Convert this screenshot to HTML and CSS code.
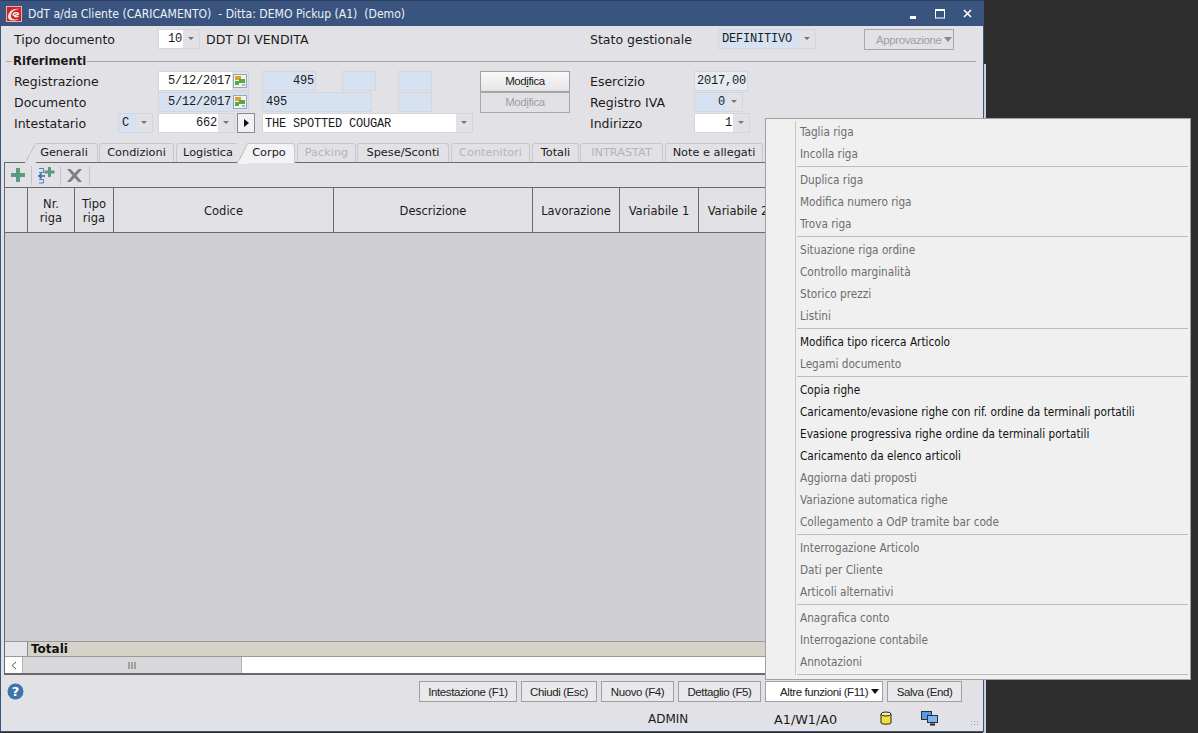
FILE: index.html
```html
<!DOCTYPE html>
<html lang="en">
<head>
    <meta charset="UTF-8">
    <title>DdT a/da Cliente</title>
    <link rel="stylesheet" href="styles.css">
</head>
<body>
    <div class="back-edge"></div>
    <div class="window">
        <div class="titlebar">
            <svg class="logo" width="16" height="16" viewBox="0 0 16 16">
                <rect width="16" height="16" fill="#c8242b"/>
                <rect x="0.500" y="0.500" width="15" height="15" fill="none" stroke="#e8b0a8"/>
                <path d="M2 11C2 5 8 1.500 14 3C9 3 5 6 5 10C5 13 8 14 13 13C8 15.500 2 15 2 11Z" fill="#f4e4dc"/>
                <path d="M7 9.500C7 6.500 12 5.500 12.500 8L8.500 9.700C9 11.200 11 11 12.500 10" fill="none" stroke="#fff" stroke-width="1.300"/>
            </svg>
            <span class="title-text">DdT a/da Cliente (CARICAMENTO)  - Ditta: DEMO Pickup (A1)  (Demo)</span>
            <span class="win-ctl ctl-min"><svg width="8" height="4"><rect y="1" width="6" height="3" fill="#fff"/></svg></span>
            <span class="win-ctl ctl-max"><svg width="10" height="10"><rect x="0.500" y="0.500" width="9" height="8.500" fill="none" stroke="#fff"/><rect width="10" height="2" fill="#fff"/></svg></span>
            <span class="win-ctl ctl-close"><svg width="9" height="9"><path d="M1 1L8 8M8 1L1 8" stroke="#fff" stroke-width="1.500"/></svg></span>
        </div>

        <div class="row row-first">
            <label class="lbl lbl-tipo">Tipo documento</label>
            <span class="combo w-tipo"><span class="val val-white right">10</span><span class="arrow"></span></span>
            <span class="lbl lbl-ddt">DDT DI VENDITA</span>
            <label class="lbl lbl-stato">Stato gestionale</label>
            <span class="combo w-stato"><span class="val val-blue">DEFINITIVO</span><span class="arrow"></span></span>
            <span class="btn btn-off btn-appr">Approvazione<i class="caret"></i></span>
        </div>

        <div class="group-head">
            <span class="group-line group-line-short"></span>
            <span class="group-title">Riferimenti</span>
            <span class="group-line"></span>
        </div>

        <div class="row row-reg">
            <label class="lbl lbl-main">Registrazione</label>
            <span class="combo w-date"><span class="val val-white right">5/12/2017</span><span class="cal"><svg width="14" height="14" viewBox="0 0 14 14"><rect x="0.500" y="0.500" width="13" height="13" fill="#f2f4f0" stroke="#8fa8c0"/><rect x="2" y="2" width="6" height="4" fill="#e0a030"/><rect x="6" y="5" width="6" height="4" fill="#58a848"/><rect x="2" y="7" width="4" height="4" fill="#58a848"/><rect x="9" y="10" width="3" height="2" fill="#a8b4c0"/></svg></span></span>
            <span class="field val-blue right w-num">495</span>
            <span class="field val-blue w-blank ml-26"></span>
            <span class="field val-blue w-blank ml-22"></span>
            <span class="btn btn-mod ml-48">Mod<u>i</u>fica</span>
            <label class="lbl lbl-right">Esercizio</label>
            <span class="field val-plain right w-eser">2017,00</span>
        </div>

        <div class="row row-doc">
            <label class="lbl lbl-main">Documento</label>
            <span class="combo w-date combo-blue"><span class="val val-blue right">5/12/2017</span><span class="cal"><svg width="14" height="14" viewBox="0 0 14 14"><rect x="0.500" y="0.500" width="13" height="13" fill="#f2f4f0" stroke="#8fa8c0"/><rect x="2" y="2" width="6" height="4" fill="#e0a030"/><rect x="6" y="5" width="6" height="4" fill="#58a848"/><rect x="2" y="7" width="4" height="4" fill="#58a848"/><rect x="9" y="10" width="3" height="2" fill="#a8b4c0"/></svg></span></span>
            <span class="field val-blue w-doc">495</span>
            <span class="field val-blue w-blank ml-26"></span>
            <span class="btn btn-off btn-mod ml-48">Mod<u>i</u>fica</span>
            <label class="lbl lbl-right">Registro IVA</label>
            <span class="combo w-reg"><span class="val val-blue right">0</span><span class="arrow"></span></span>
        </div>

        <div class="row row-int">
            <label class="lbl lbl-int">Intestatario</label>
            <span class="combo w-c"><span class="val val-blue">C</span><span class="arrow"></span></span>
            <span class="combo w-code"><span class="val val-white right">662</span><span class="arrow"></span></span>
            <span class="go-btn"><i class="go-tri"></i></span>
            <span class="combo w-name"><span class="val val-white">THE SPOTTED COUGAR</span><span class="arrow"></span></span>
            <label class="lbl lbl-ind">Indirizzo</label>
            <span class="combo w-ind"><span class="val val-white right">1</span><span class="arrow"></span></span>
        </div>

        <div class="tabs">
            <span class="tab tab-slant t-gen">Generali</span>
            <span class="tab t-con">Condizioni</span>
            <span class="tab t-log">Logistica</span>
            <span class="tab tab-active t-cor">Corpo</span>
            <span class="tab tab-off t-pac">Packing</span>
            <span class="tab t-spe">Spese/Sconti</span>
            <span class="tab tab-off t-cnt">Contenitori</span>
            <span class="tab t-tot">Totali</span>
            <span class="tab tab-off t-int">INTRASTAT</span>
            <span class="tab t-not">Note e allegati</span>
        </div>

        <div class="panel">
            <div class="toolbar">
                <span class="tool"><svg width="16" height="16" viewBox="0 0 16 16"><path d="M6 1H10V6H15V10H10V15H6V10H1V6H6Z" fill="#5b9a7c"/></svg></span>
                <span class="tool"><svg width="18" height="18" viewBox="0 0 18 18"><path d="M2 2.500H6.500V6.500H2M2 13.500H6.500V17H2" fill="none" stroke="#4a80b0"/><path d="M8 10H2M4.500 7.500L2 10L4.500 12.500" fill="none" stroke="#2f6cb4" stroke-width="1.600"/><path d="M11 1H14V4.500H17.500V7.500H14V11H11V7.500H7.500V4.500H11Z" fill="#5b9a7c"/></svg></span>
                <span class="tool"><svg width="17" height="15" viewBox="0 0 17 15"><path d="M1 1H4.500L8.500 5.200L12.500 1H16L10.500 7.500L16 14H12.500L8.500 9.800L4.500 14H1L6.500 7.500Z" fill="#7f7f7f"/></svg></span>
            </div>
            <div class="grid-head">
                <span class="col c-0"></span>
                <span class="col c-1">Nr.<br>riga</span>
                <span class="col c-2">Tipo<br>riga</span>
                <span class="col c-3">Codice</span>
                <span class="col c-4">Descrizione</span>
                <span class="col c-5">Lavorazione</span>
                <span class="col c-6">Variabile 1</span>
                <span class="col c-7">Variabile 2</span>
            </div>
            <div class="grid-body"></div>
            <div class="totals">
                <span class="tot-corner"></span>
                <span class="tot-label">Totali</span>
            </div>
            <div class="hscroll">
                <span class="sc-arrow"><svg width="6" height="9"><path d="M5 1L1 4.500L5 8" fill="none" stroke="#555"/></svg></span>
                <span class="sc-thumb"><svg width="8" height="7"><path d="M1 0V7M4 0V7M7 0V7" stroke="#666"/></svg></span>
            </div>
        </div>

        <div class="actions">
            <svg class="help" width="17" height="17" viewBox="0 0 17 17">
                <circle cx="8.500" cy="8.500" r="8" fill="#3f74ad"/>
                <text x="8.500" y="13" text-anchor="middle" class="help-mark">?</text>
            </svg>
            <span class="btn a-int">Intestazione (F1)</span>
            <span class="btn a-chi">Chiudi (Esc)</span>
            <span class="btn a-nuo">Nuovo (F4)</span>
            <span class="btn a-det">Dettaglio (F5)</span>
            <span class="btn btn-white a-alt">Altre funzioni (F11)<i class="caret caret-dark"></i></span>
            <span class="btn a-sal">Salva (End)</span>
        </div>

        <div class="status">
            <span class="st-user">ADMIN</span>
            <span class="st-code">A1/W1/A0</span>
            <svg class="st-db" width="12" height="15" viewBox="0 0 12 15">
                <path d="M1 3V12C1 13.500 11 13.500 11 12V3Z" fill="#efe03c" stroke="#222"/>
                <ellipse cx="6" cy="3" rx="5" ry="2" fill="#f8f0a0" stroke="#222"/>
            </svg>
            <svg class="st-net" width="17" height="15" viewBox="0 0 17 15">
                <rect x="0.500" y="0.500" width="10" height="8" fill="#5c9ae0" stroke="#234"/>
                <rect x="6.500" y="4.500" width="10" height="7" fill="#7fb4f0" stroke="#234"/>
                <path d="M9 13.500H14" stroke="#222" stroke-width="2"/>
            </svg>
            <span class="grip"></span>
        </div>
    </div>

    <!-- context menu of Altre funzioni -->
    <div class="menu">
        <div class="menu-item">Taglia riga</div>
        <div class="menu-item">Incolla riga</div>
        <div class="menu-sep"></div>
        <div class="menu-item">Duplica riga</div>
        <div class="menu-item">Modifica numero riga</div>
        <div class="menu-item">Trova riga</div>
        <div class="menu-sep"></div>
        <div class="menu-item">Situazione riga ordine</div>
        <div class="menu-item">Controllo marginalità</div>
        <div class="menu-item">Storico prezzi</div>
        <div class="menu-item">Listini</div>
        <div class="menu-sep"></div>
        <div class="menu-item on">Modifica tipo ricerca Articolo</div>
        <div class="menu-item">Legami documento</div>
        <div class="menu-sep"></div>
        <div class="menu-item on">Copia righe</div>
        <div class="menu-item on">Caricamento/evasione righe con rif. ordine da terminali portatili</div>
        <div class="menu-item on">Evasione progressiva righe ordine da terminali portatili</div>
        <div class="menu-item on">Caricamento da elenco articoli</div>
        <div class="menu-item">Aggiorna dati proposti</div>
        <div class="menu-item">Variazione automatica righe</div>
        <div class="menu-item">Collegamento a OdP tramite bar code</div>
        <div class="menu-sep"></div>
        <div class="menu-item">Interrogazione Articolo</div>
        <div class="menu-item">Dati per Cliente</div>
        <div class="menu-item">Articoli alternativi</div>
        <div class="menu-sep"></div>
        <div class="menu-item">Anagrafica conto</div>
        <div class="menu-item">Interrogazione contabile</div>
        <div class="menu-item">Annotazioni</div>
        <div class="menu-sep"></div>
    </div>
</body>
</html>
```

FILE: styles.css
```css
html, body {
    margin: 0;
    height: 733px;
    overflow: hidden;
}
body {
    position: relative;
    background-color: #2d2d2d;
    font-family: "DejaVu Sans", sans-serif;
    font-size: 12.5px;
    color: #1a1a1a;
}
.back-edge {
    position: absolute;
    left: 983px;
    top: 64px;
    width: 3px;
    height: 669px;
    background-color: #c9ced8;
}
.window {
    position: relative;
    box-sizing: border-box;
    width: 984px;
    height: 732px;
    background-color: #e2e2e6;
    border: 1px solid #3a5480;
    border-top: none;
}

/* title bar */
.titlebar {
    display: flex;
    align-items: center;
    height: 26px;
    margin: 0 -1px;
    padding-left: 6px;
    background-color: #3a5480;
    color: #eef1f6;
    border-top: 1px solid #2c3f60;
    box-sizing: border-box;
}
.logo {
    flex: none;
}
.title-text {
    margin-left: 6px;
    white-space: pre;
    font-family: "DejaVu Sans Condensed", "DejaVu Sans", sans-serif;
    font-size: 12.1px;
}
.win-ctl {
    display: flex;
    align-items: center;
}
.ctl-min { margin-left: auto; margin-top: 6px; }
.ctl-max { margin-left: 17px; }
.ctl-close { margin-left: 18px; margin-right: 12px; }

/* form rows */
.row {
    display: flex;
    align-items: center;
    height: 20px;
    padding-left: 13px;
    white-space: nowrap;
}
.row-first { margin-top: 3px; }
.row-reg { margin-top: 3px; }
.row-doc { margin-top: 1px; }
.row-int { margin-top: 1px; }
.lbl { display: block; flex: none; }
.lbl-tipo { width: 144px; }
.lbl-ddt { width: 384px; margin-left: 6px; }
.lbl-stato { width: 128px; }
.lbl-main { width: 144px; }
.lbl-int { width: 104px; }
.lbl-right { width: 104px; margin-left: 20px; }
.lbl-ind { width: 104px; margin-left: 117px; }

.field, .val {
    font-family: "Liberation Mono", monospace;
    font-size: 12px;
    letter-spacing: -0.2px;
    line-height: 18px;
    box-sizing: border-box;
    padding: 0 3px;
    height: 100%;
    overflow: hidden;
}
.field {
    flex: none;
    height: 20px;
    border: 1px solid #d4d6dc;
}
.val { flex: 1; min-width: 0; }
.val-white { background-color: #fff; }
.val-blue { background-color: #d6e2f1; }
.val-plain { background-color: #e6ebf2; }
.field.right, .val.right { padding: 0 1px 0 0; text-align: right; }
.w-name .val { padding: 1px 0 0 2px; }

.combo {
    display: flex;
    flex: none;
    box-sizing: border-box;
    height: 20px;
    border: 1px solid #d4d6dc;
}
.arrow {
    flex: none;
    position: relative;
    width: 16px;
    background-color: #e2e2e6;
}
.arrow::after {
    content: "";
    position: absolute;
    left: 5px;
    top: 7px;
    border: 3px solid transparent;
    border-top: 3px solid #777;
    border-bottom: none;
}
.cal {
    display: flex;
    align-items: center;
    flex: none;
    width: 16px;
    padding-left: 1px;
    box-sizing: border-box;
    background-color: #e2e2e6;
}
.combo-blue .cal { background-color: #d6e2f1; }

.w-tipo { width: 42px; }
.w-stato { width: 98px; }
.w-date { width: 91px; margin-right: 13px; }
.w-num { width: 54px; }
.w-blank { width: 34px; }
.w-doc { width: 110px; }
.w-eser { width: 54px; }
.w-reg { width: 49px; }
.w-c { width: 35px; margin-right: 5px; }
.w-code { width: 77px; }
.w-name { width: 211px; }
.w-ind { width: 56px; }
.ml-22 { margin-left: 22px; }
.ml-26 { margin-left: 26px; }
.ml-48 { margin-left: 48px; }

.go-btn {
    display: flex;
    align-items: center;
    justify-content: center;
    flex: none;
    box-sizing: border-box;
    width: 18px;
    height: 20px;
    margin: 0 7px 0 2px;
    background-color: #f2f2f4;
    border: 1px solid #8a8a8a;
}
.go-tri {
    border-left: 5px solid #111;
    border-top: 4px solid transparent;
    border-bottom: 4px solid transparent;
}

/* buttons */
.btn {
    display: flex;
    align-items: center;
    justify-content: center;
    flex: none;
    box-sizing: border-box;
    height: 21px;
    background: linear-gradient(#f8f8f8, #e6e6e8);
    border: 1px solid #a0a0a0;
    font-family: "Liberation Sans", sans-serif;
    font-size: 11.5px;
    letter-spacing: -0.4px;
    color: #222;
}
.btn-off {
    background: #e2e2e6;
    color: #a0a0a0;
    border-color: #a8a8a8;
}
.btn-mod { width: 90px; }
.btn-appr {
    justify-content: flex-start;
    width: 90px;
    margin-left: 48px;
    padding: 2px 0 0 11px;
    letter-spacing: -0.4px;
}
.btn-white { background: #fff; }
.caret {
    display: inline-block;
    flex: none;
    margin-left: 2px;
    margin-bottom: 2px;
    border-top: 5px solid #888;
    border-left: 4px solid transparent;
    border-right: 4px solid transparent;
}
.caret-dark { border-top-color: #111; margin-left: 3px; margin-bottom: 0; }

/* group header */
.group-head {
    display: flex;
    align-items: center;
    height: 14px;
    margin: 5px 7px 0 5px;
}
.group-line {
    flex: 1;
    height: 1px;
    background-color: #a8a8ac;
}
.group-line-short {
    flex: none;
    width: 6px;
}
.group-title {
    padding: 0 1px;
    font-weight: bold;
    font-size: 11.6px;
}

/* tabs */
.tabs {
    display: flex;
    align-items: flex-end;
    height: 19px;
    margin-top: 10px;
    font-size: 11.3px;
}
.tab {
    position: relative;
    flex: none;
    box-sizing: border-box;
    height: 19px;
    line-height: 18px;
    text-align: center;
    border: 1px solid #c8c8cc;
    border-bottom: none;
    border-radius: 3px 3px 0 0;
    white-space: nowrap;
}
.tab-off { color: #b4b4b8; }
.tab-active {
    z-index: 1;
    height: 20px;
    margin-bottom: -1px;
    background-color: #f3f3f6;
    border-left: none;
    border-radius: 0 3px 0 0;
}
.tab-slant { border-left: none; border-radius: 0 3px 0 0; }
/* slanted left side of the first and the active tab */
.tab-slant::before {
    content: "";
    position: absolute;
    left: 0;
    top: -1px;
    width: 11px;
    height: 20px;
    background: linear-gradient(to bottom right, #e2e2e6 47%, #c8c8cc 47%, #c8c8cc 53%, #e2e2e6 53%);
}
.tab-active::before {
    content: "";
    position: absolute;
    left: -3px;
    top: -1px;
    width: 11px;
    height: 21px;
    background: linear-gradient(to bottom right, #e2e2e6 47%, #c8c8cc 47%, #c8c8cc 53%, #f3f3f6 53%);
}
.t-gen { width: 73px; margin-left: 24px; padding-left: 6px; }
.t-con { width: 75px; margin-left: 1px; }
.t-log { width: 64px; margin-left: 2px; }
.t-cor { width: 55px; padding-left: 4px; }
.t-pac { width: 59px; margin-left: 2px; }
.t-spe { width: 92px; margin-left: 1px; }
.t-cnt { width: 79px; margin-left: 2px; }
.t-tot { width: 47px; margin-left: 2px; }
.t-int { width: 83px; margin-left: 1px; }
.t-not { width: 98px; margin-left: 2px; }

/* grid panel */
.panel {
    display: flex;
    flex-direction: column;
    box-sizing: border-box;
    width: 975px;
    height: 513px;
    margin-left: 3px;
    border: 1px solid #6a6a6e;
    border-width: 1px 1px 2px 1px;
}
.toolbar {
    display: flex;
    align-items: center;
    height: 25px;
    flex: none;
    box-sizing: border-box;
    border-bottom: 1px solid #6a6a6e;
}
.tool {
    display: flex;
    align-items: center;
    justify-content: center;
    box-sizing: border-box;
    height: 19px;
    border-right: 1px solid #c4c4c8;
}
.tool:nth-child(1) { width: 27px; }
.tool:nth-child(2) { width: 29px; }
.tool:nth-child(3) { width: 29px; padding-right: 2px; }
.grid-head {
    display: flex;
    flex: none;
    height: 45px;
    box-sizing: border-box;
    border-bottom: 1px solid #6a6a6e;
    font-size: 11.5px;
}
.col {
    display: flex;
    align-items: center;
    justify-content: center;
    flex: none;
    box-sizing: border-box;
    padding-top: 1px;
    text-align: center;
    line-height: 14px;
    border-right: 1px solid #6a6a6e;
}
.c-0 { width: 23px; }
.c-1 { width: 47px; }
.c-2 { width: 39px; }
.c-3 { width: 220px; }
.c-4 { width: 199px; }
.c-5 { width: 87px; }
.c-6 { width: 79px; }
.c-7 { width: 79px; }
.grid-body {
    flex: 1;
    background-color: #cfcfd3;
}
.totals {
    display: flex;
    flex: none;
    box-sizing: border-box;
    height: 16px;
    background-color: #d5d2c8;
    border-top: 1px solid #9a9a9a;
    border-bottom: 1px solid #9a9a9a;
}
.tot-corner {
    width: 22px;
    background-color: #e6e6ea;
    border-right: 1px solid #8a8a8a;
}
.tot-label {
    padding-left: 3px;
    font-weight: bold;
    font-size: 12px;
    line-height: 14px;
    color: #111;
}
.hscroll {
    display: flex;
    flex: none;
    height: 16px;
    background-color: #fff;
}
.sc-arrow {
    display: flex;
    align-items: center;
    justify-content: center;
    width: 17px;
}
.sc-thumb {
    display: flex;
    align-items: center;
    justify-content: center;
    box-sizing: border-box;
    width: 220px;
    background-color: #d8d8da;
    border: 1px solid #b4b4b8;
    border-width: 0 1px;
}

/* bottom buttons */
.actions {
    display: flex;
    align-items: center;
    gap: 4px;
    height: 21px;
    margin-top: 6px;
    padding-left: 6px;
}
.actions .btn { background: #e9e9ec; }
.actions .btn-white { background: #fff; }
.actions .a-alt { justify-content: flex-start; padding-left: 14px; }
.help { flex: none; margin-right: 391px; }
.help-mark {
    font-family: "DejaVu Sans", sans-serif;
    font-size: 13px;
    font-weight: bold;
    fill: #fff;
}
.a-int { width: 98px; }
.a-chi { width: 76px; }
.a-nuo { width: 73px; }
.a-det { width: 83px; }
.a-alt { width: 118px; }
.a-sal { width: 75px; }

/* status bar */
.status {
    position: relative;
    display: flex;
    align-items: center;
    height: 20px;
    margin-top: 7px;
    font-size: 12px;
}
.st-user { margin-left: 647px; width: 126px; }
.st-code { width: 106px; font-size: 12.8px; }
.st-db { flex: none; margin-top: -2px; }
.st-net { flex: none; margin-left: 29px; margin-top: -2px; }
.grip {
    position: absolute;
    right: 4px;
    bottom: 2px;
    width: 9px;
    height: 7px;
    background-image: radial-gradient(#a0a0a4 1px, transparent 1px);
    background-size: 3px 3px;
}

/* context menu */
.menu {
    position: absolute;
    left: 765px;
    top: 118px;
    box-sizing: border-box;
    width: 426px;
    height: 562px;
    padding: 2px;
    background-color: #f0f0f0;
    border: 1px solid #a0a0a0;
    font-family: "DejaVu Sans Condensed", "DejaVu Sans", sans-serif;
    font-size: 11.7px;
    color: #6d6d6d;
}
.menu::before {
    content: "";
    position: absolute;
    left: 29px;
    top: 2px;
    bottom: 4px;
    width: 1px;
    background-color: #c4c4c4;
}
.menu-item {
    height: 22px;
    line-height: 22px;
    padding-left: 32px;
    white-space: nowrap;
}
.menu-item.on { color: #111; }
.menu-sep {
    height: 1px;
    margin: 1px 0 2px 29px;
    background-color: #bdbdbd;
}
```
